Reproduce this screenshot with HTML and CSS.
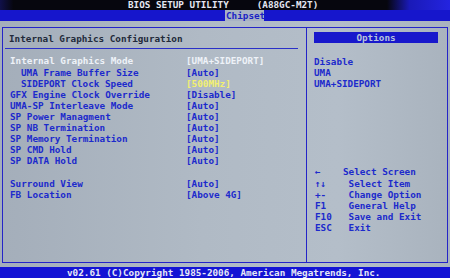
FILE: index.html
```html
<!DOCTYPE html>
<html>
<head>
<meta charset="utf-8">
<link rel="stylesheet" href="styles.css">
</head>
<body>
<div class="screen">
  <div class="titlebar"><span class="title">BIOS SETUP UTILITY     (A88GC-M2T)</span></div>
  <div class="menubar"><span class="tab">Chipset</span></div>
  <div class="panel">
    <section class="main">
      <div class="section-title">Internal Graphics Configuration</div>
      <div class="rows">
        <div class="row active"><span class="label">Internal Graphics Mode</span><span class="value">[UMA+SIDEPORT]</span></div>
        <div class="row"><span class="label sub">UMA Frame Buffer Size</span><span class="value">[Auto]</span></div>
        <div class="row"><span class="label sub">SIDEPORT Clock Speed</span><span class="value hot">[500MHz]</span></div>
        <div class="row"><span class="label">GFX Engine Clock Override</span><span class="value">[Disable]</span></div>
        <div class="row"><span class="label">UMA-SP Interleave Mode</span><span class="value">[Auto]</span></div>
        <div class="row"><span class="label">SP Power Managment</span><span class="value">[Auto]</span></div>
        <div class="row"><span class="label">SP NB Termination</span><span class="value">[Auto]</span></div>
        <div class="row"><span class="label">SP Memory Termination</span><span class="value">[Auto]</span></div>
        <div class="row"><span class="label">SP CMD Hold</span><span class="value">[Auto]</span></div>
        <div class="row"><span class="label">SP DATA Hold</span><span class="value">[Auto]</span></div>
        <div class="row blank"></div>
        <div class="row"><span class="label">Surround View</span><span class="value">[Auto]</span></div>
        <div class="row"><span class="label">FB Location</span><span class="value">[Above 4G]</span></div>
      </div>
    </section>
    <aside class="side">
      <div class="options-head">Options</div>
      <ul class="options">
        <li>Disable</li>
        <li>UMA</li>
        <li>UMA+SIDEPORT</li>
      </ul>
      <ul class="help">
        <li>←    Select Screen</li>
        <li>↑↓    Select Item</li>
        <li>+-    Change Option</li>
        <li>F1    General Help</li>
        <li>F10   Save and Exit</li>
        <li>ESC   Exit</li>
      </ul>
    </aside>
  </div>
  <div class="footer">v02.61 (C)Copyright 1985-2006, American Megatrends, Inc.</div>
</div>
</body>
</html>
```
FILE: styles.css
```css
html, body {
  margin: 0;
  padding: 0;
}
body {
  width: 450px;
  height: 278px;
  overflow: hidden;
  background: #aab4bf;
  font-family: "DejaVu Sans Mono", "Liberation Mono", monospace;
  font-weight: bold;
  font-size: 9.3px;
}
.screen {
  display: flex;
  flex-direction: column;
  width: 450px;
  height: 278px;
  background: linear-gradient(90deg, #a4aeba 0%, #b0bac5 45%, #b4bec9 75%, #a9b3be 100%);
}
.titlebar {
  height: 10px;
  line-height: 10px;
  padding-left: 128px;
  background: linear-gradient(90deg, #10104a 0%, #06060e 3%, #06060e 86%, #1a1ab8 91%, #2424e0 100%);
  color: #e4e6f2;
  white-space: pre;
}
.menubar {
  height: 11px;
  line-height: 11px;
  padding-left: 225px;
  background: #1616cc;
}
.tab {
  display: inline-block;
  width: 38px;
  height: 11px;
  padding-left: 1px;
  background: #a8b2c4;
  color: #1a22c4;
}
.panel {
  box-sizing: border-box;
  margin: 6px 2px 0 2px;
  height: 236px;
  border: 1px solid #2424c8;
  display: flex;
}
.main {
  width: 303px;
  border-right: 1px solid #2424c8;
  padding-top: 5px;
  color: #1c2acc;
}
.section-title {
  line-height: 11.1px;
  padding-left: 4px;
  padding-bottom: 3.9px;
  margin: 0 8px 0 2px;
  border-bottom: 1px solid #2a30c8;
  color: #222a3a;
}
.rows {
  margin-top: 6.5px;
  padding-left: 7px;
}
.row {
  display: grid;
  grid-template-columns: 176px auto;
  height: 11.1px;
  line-height: 11.1px;
  white-space: pre;
}
.label.sub {
  padding-left: 11px;
}
.row.active {
  color: #eef2f8;
}
.value.hot {
  color: #f2f070;
}
.side {
  flex: 1;
  padding-top: 4px;
  color: #1c2acc;
}
.options-head {
  margin: 0 9px 0 7px;
  height: 11px;
  line-height: 11px;
  background: #1818cc;
  color: #b8c4dc;
  text-align: center;
}
.options, .help {
  list-style: none;
  margin: 0;
  padding: 0;
}
.options {
  margin-top: 12.5px;
  padding-left: 7px;
}
.options li, .help li {
  height: 11.1px;
  line-height: 11.1px;
  white-space: pre;
}
.help {
  margin-top: 77.7px;
  padding-left: 8px;
}
.footer {
  margin-top: 4px;
  height: 11px;
  line-height: 11px;
  padding-left: 67px;
  background: #1414d4;
  color: #e6e8f6;
  white-space: pre;
}
```
